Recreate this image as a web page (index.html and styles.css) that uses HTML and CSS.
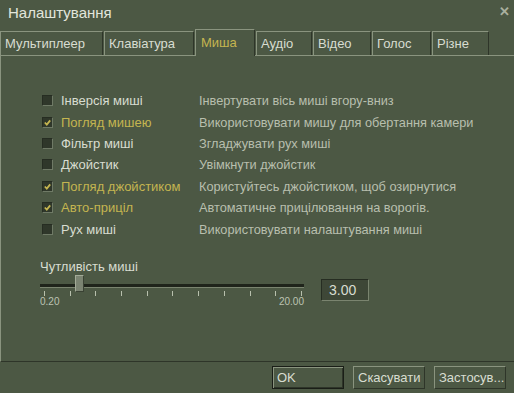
FILE: index.html
```html
<!DOCTYPE html>
<html lang="uk">
<head>
    <meta charset="UTF-8">
    <title>Налаштування</title>
    <link rel="stylesheet" href="styles.css">
</head>
<body>
    <div class="window">
        <div class="titlebar">
            <span class="title">Налаштування</span>
            <span class="close">✕</span>
        </div>

        <div class="tabs">
            <div class="tab t1">Мультиплеер</div>
            <div class="tab t2">Клавіатура</div>
            <div class="tab t3 active">Миша</div>
            <div class="tab t4">Аудіо</div>
            <div class="tab t5">Відео</div>
            <div class="tab t6">Голос</div>
            <div class="tab t7">Різне</div>
        </div>

        <div class="panel">
            <div class="options">
                <div class="opt">
                    <span class="box"></span>
                    <span class="label">Інверсія миші</span>
                    <span class="desc">Інвертувати вісь миші вгору-вниз</span>
                </div>
                <div class="opt on">
                    <span class="box"><svg viewBox="0 0 10 10"><path d="M2 5 L4.2 7.3 L8 2.6" /></svg></span>
                    <span class="label">Погляд мишею</span>
                    <span class="desc">Використовувати мишу для обертання камери</span>
                </div>
                <div class="opt">
                    <span class="box"></span>
                    <span class="label">Фільтр миші</span>
                    <span class="desc">Згладжувати рух миші</span>
                </div>
                <div class="opt">
                    <span class="box"></span>
                    <span class="label">Джойстик</span>
                    <span class="desc">Увімкнути джойстик</span>
                </div>
                <div class="opt on">
                    <span class="box"><svg viewBox="0 0 10 10"><path d="M2 5 L4.2 7.3 L8 2.6" /></svg></span>
                    <span class="label">Погляд джойстиком</span>
                    <span class="desc">Користуйтесь джойстиком, щоб озирнутися</span>
                </div>
                <div class="opt on">
                    <span class="box"><svg viewBox="0 0 10 10"><path d="M2 5 L4.2 7.3 L8 2.6" /></svg></span>
                    <span class="label">Авто-приціл</span>
                    <span class="desc">Автоматичне прицілювання на ворогів.</span>
                </div>
                <div class="opt">
                    <span class="box"></span>
                    <span class="label">Рух миші</span>
                    <span class="desc">Використовувати налаштування миші</span>
                </div>
            </div>

            <div class="sensitivity">
                <div class="slider-block">
                    <div class="slider-label">Чутливість миші</div>
                    <div class="track">
                        <div class="thumb"></div>
                    </div>
                    <div class="ticks">
                        <i></i><i></i><i></i><i></i><i></i><i></i><i></i><i></i><i></i><i></i><i></i>
                    </div>
                    <div class="range">
                        <span>0.20</span>
                        <span>20.00</span>
                    </div>
                </div>
                <div class="value">3.00</div>
            </div>
        </div>

        <div class="buttons">
            <button class="btn default">OK</button>
            <button class="btn">Скасувати</button>
            <button class="btn">Застосув...</button>
        </div>
    </div>
</body>
</html>
```

FILE: styles.css
```css
body {
    margin: 0;
    background-color: #4c5844;
    font-family: "Liberation Sans", Arial, sans-serif;
    color: #d8ddd1;
}
.window {
    width: 514px;
    height: 393px;
    background-color: #4c5844;
    overflow: hidden;
}
.titlebar {
    height: 28px;
    display: flex;
    align-items: center;
    justify-content: space-between;
    padding: 0 4px 0 8px;
}
.title {
    font-size: 15px;
    color: #e2e6dc;
    margin-top: -3px;
}
.close {
    font-size: 13px;
    font-weight: bold;
    color: #a9b09f;
    margin-top: -6px;
}
.tabs {
    display: flex;
    height: 27px;
    align-items: flex-end;
}
.tab {
    height: 24px;
    box-sizing: border-box;
    border-top: 1px solid #8a947f;
    border-left: 1px solid #8a947f;
    border-right: 1px solid #2e3529;
    font-size: 13px;
    line-height: 23px;
    padding-left: 4px;
    margin-right: 1px;
    color: #d8ddd1;
}
.tab.active {
    height: 27px;
    line-height: 26px;
    color: #c4b550;
    margin-bottom: -1px;
    background-color: #4c5844;
    position: relative;
    z-index: 1;
}
.t1 { width: 103px; }
.t2 { width: 90px; }
.t3 { width: 60px; padding-left: 5px; }
.t4 { width: 56px; }
.t5 { width: 58px; }
.t6 { width: 59px; }
.t7 { width: 57px; }

.panel {
    height: 307px;
    box-sizing: border-box;
    border-top: 1px solid #8a947f;
    border-left: 1px solid #8a947f;
    border-bottom: 1px solid #2e3529;
    padding: 34px 0 0 41px;
}
.options {
    display: flex;
    flex-direction: column;
}
.opt {
    display: grid;
    grid-template-columns: 19px 138px auto;
    align-items: center;
    height: 21.4px;
    font-size: 13px;
}
.box {
    width: 11px;
    height: 11px;
    box-sizing: border-box;
    background-color: #2f372a;
    border-top: 1px solid #262d22;
    border-left: 1px solid #262d22;
    border-right: 1px solid #6f7a66;
    border-bottom: 1px solid #6f7a66;
    display: flex;
}
.box svg {
    width: 9px;
    height: 9px;
}
.box path {
    fill: none;
    stroke: #c4b550;
    stroke-width: 2;
}
.opt.on .label {
    color: #c4b550;
}
.desc {
    color: #b8bfae;
    font-size: 12.75px;
}

.sensitivity {
    display: flex;
    align-items: flex-start;
    margin-top: 19px;
    margin-left: -2px;
}
.slider-block {
    width: 264px;
}
.slider-label {
    font-size: 13px;
    height: 18px;
}
.track {
    position: relative;
    height: 3px;
    margin-top: 7px;
    background-color: #1f241b;
    border-bottom: 1px solid #7a846f;
}
.thumb {
    position: absolute;
    left: 35px;
    top: -9px;
    width: 7px;
    height: 15px;
    background-color: #7b8472;
    border-top: 1px solid #a3ab98;
    border-left: 1px solid #a3ab98;
    border-right: 1px solid #3a4234;
    border-bottom: 1px solid #3a4234;
}
.ticks {
    display: flex;
    justify-content: space-between;
    padding: 0 2px 0 4px;
    margin-top: 3px;
}
.ticks i {
    width: 1px;
    height: 5px;
    background-color: #b8c0ad;
}
.range {
    display: flex;
    justify-content: space-between;
    font-size: 10px;
    color: #bcc3b2;
}
.value {
    margin-left: 17px;
    margin-top: 20px;
    width: 48px;
    height: 22px;
    box-sizing: border-box;
    background-color: #3e4737;
    border-top: 1px solid #262d22;
    border-left: 1px solid #262d22;
    border-right: 1px solid #7a846f;
    border-bottom: 1px solid #7a846f;
    font-size: 14px;
    line-height: 20px;
    padding-left: 7px;
}

.buttons {
    display: flex;
    justify-content: flex-end;
    gap: 9px;
    padding: 4px 8px 0 0;
}
.btn {
    width: 72px;
    height: 23px;
    box-sizing: border-box;
    background-color: #4c5844;
    color: #d8ddd1;
    font-family: "Liberation Sans", Arial, sans-serif;
    font-size: 13px;
    text-align: left;
    padding: 0 0 0 4px;
    border-top: 1px solid #8a947f;
    border-left: 1px solid #8a947f;
    border-right: 1px solid #2e3529;
    border-bottom: 1px solid #2e3529;
}
.btn.default {
    border: 1px solid #1a1e17;
    box-shadow: inset 1px 1px 0 #8a947f, inset -1px -1px 0 #2e3529;
}
```
